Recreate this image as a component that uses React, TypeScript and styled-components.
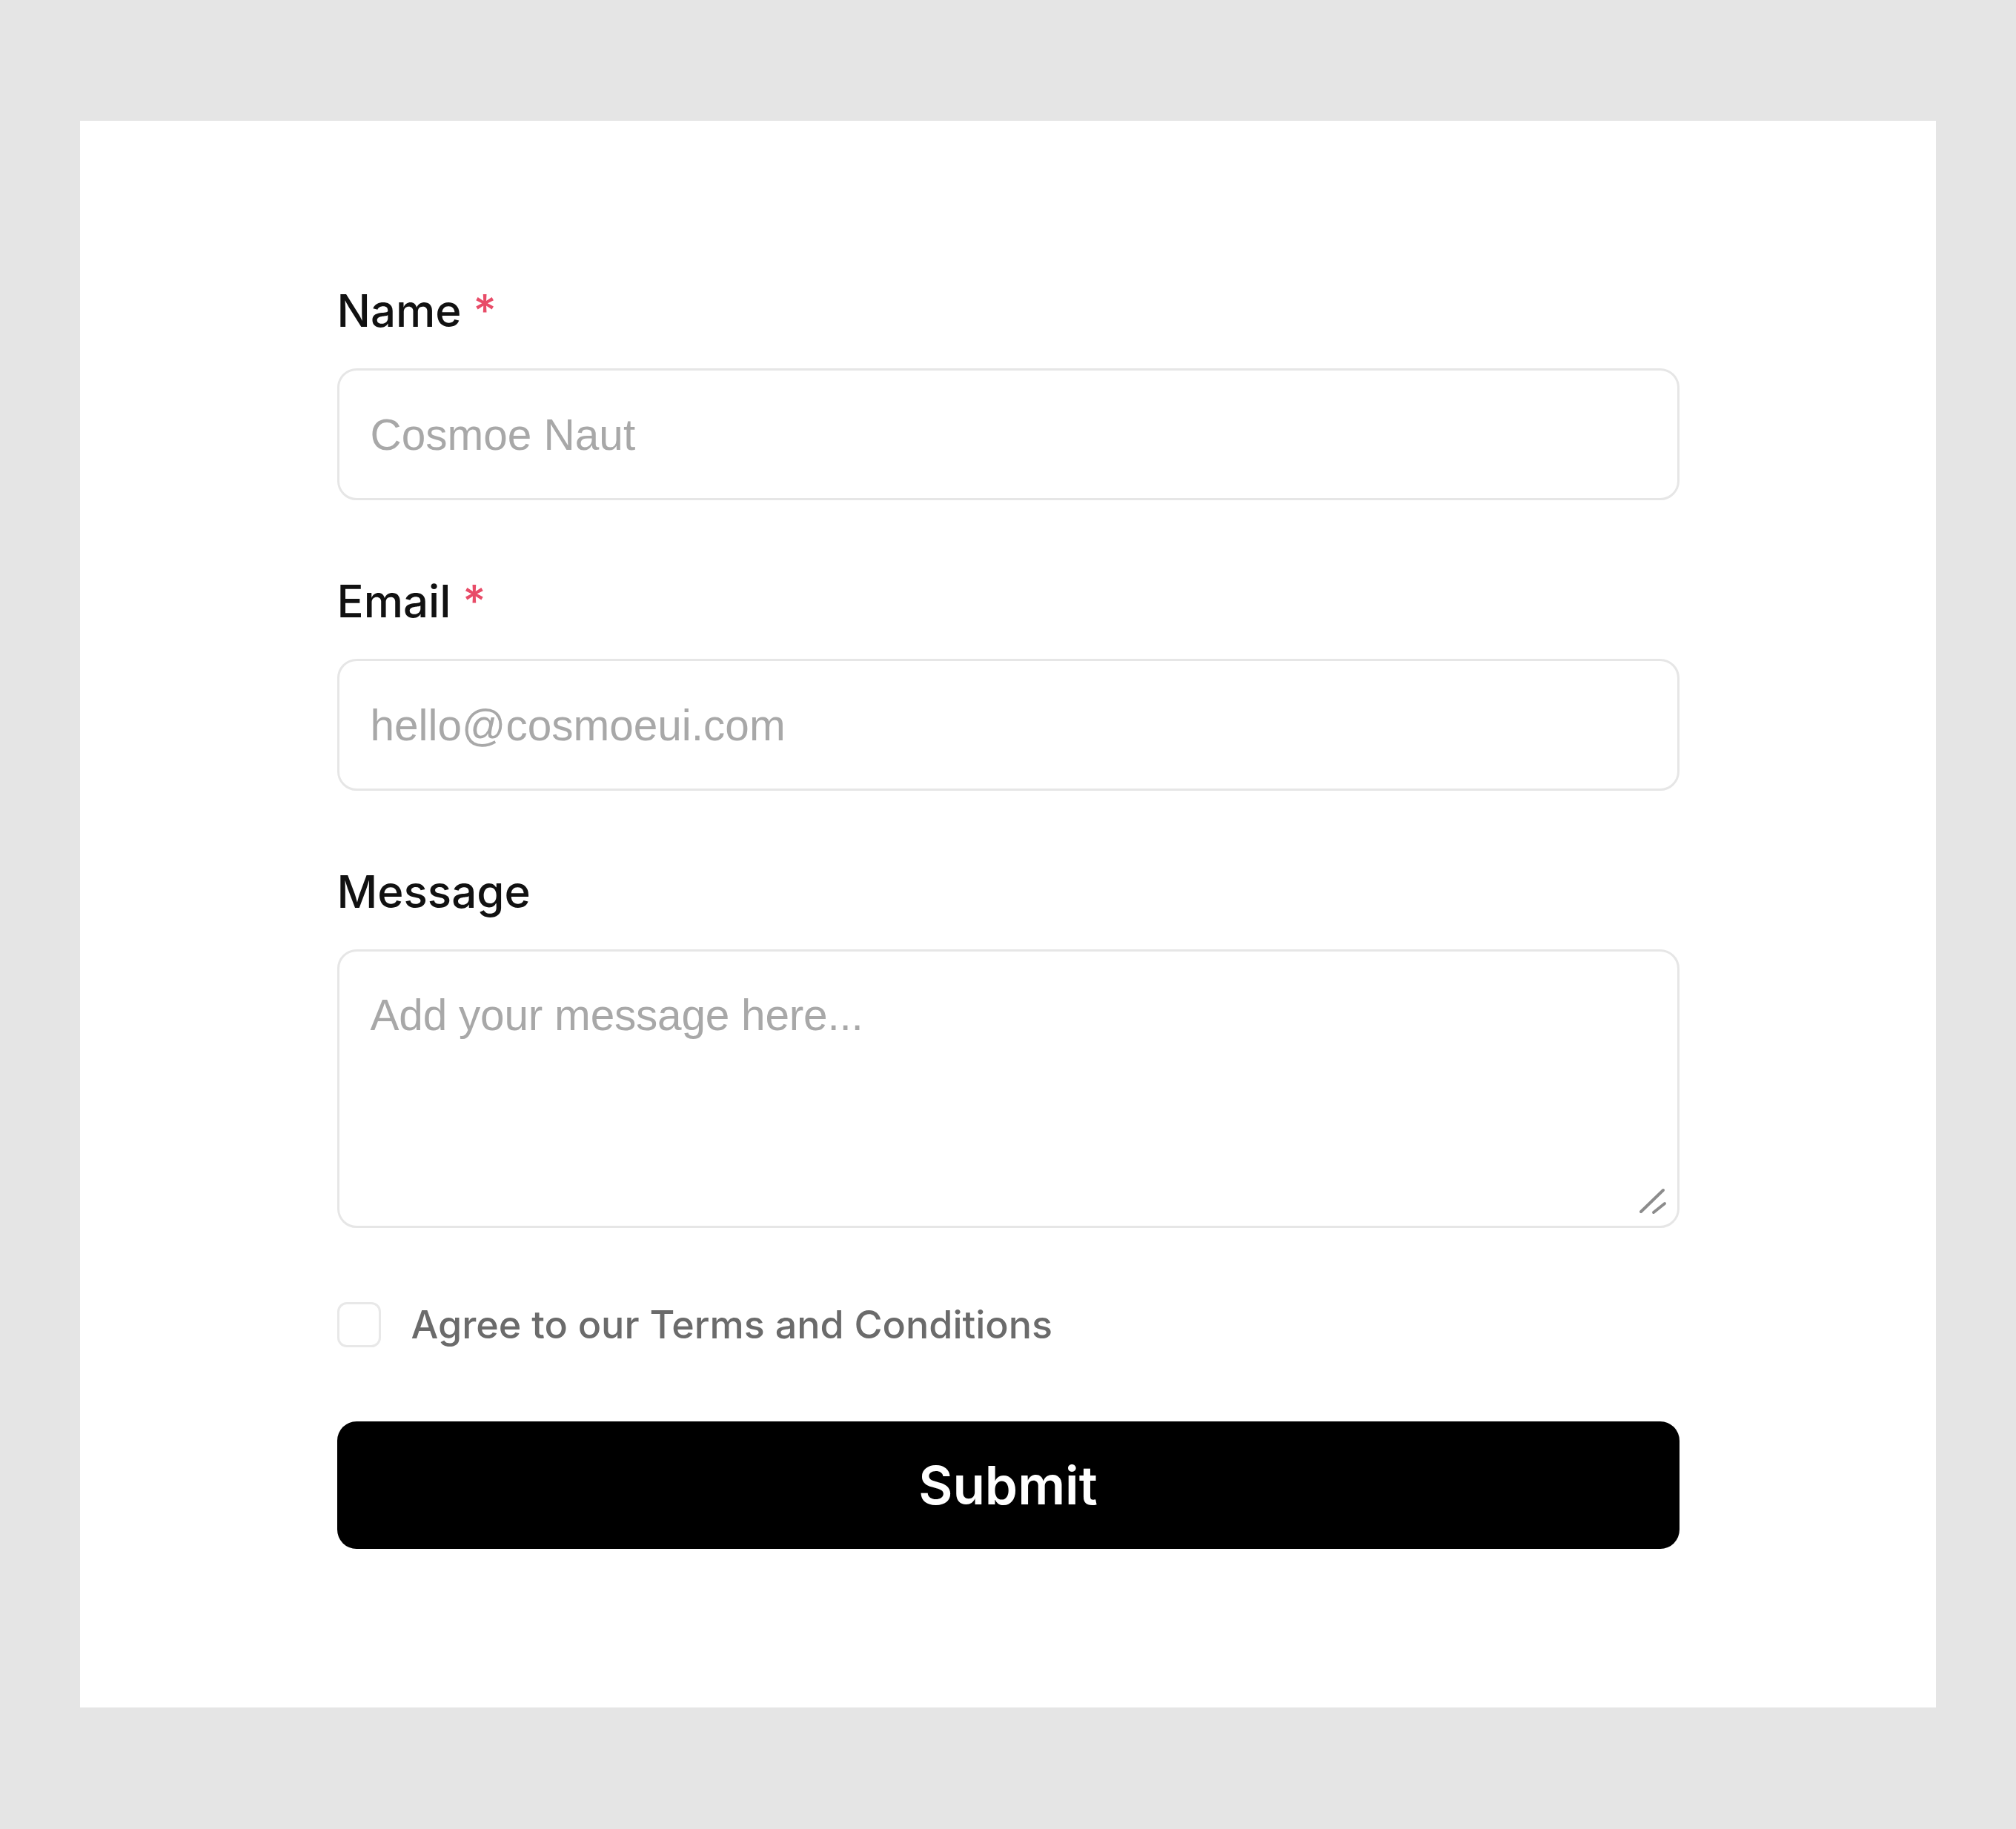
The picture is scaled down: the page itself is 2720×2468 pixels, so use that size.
import { FC } from 'react'
import styled, { createGlobalStyle } from 'styled-components'

const GlobalStyle = createGlobalStyle`
  html, body {
    margin: 0;
    padding: 0;
    background: #e5e5e5;
  }
  * {
    box-sizing: border-box;
  }
`

interface FieldProps {
  label: string
  required?: boolean
  placeholder: string
  multiline?: boolean
  type?: string
}

const Field: FC<FieldProps> = ({ label, required, placeholder, multiline, type = 'text' }) => (
  <FieldWrap>
    <Label>
      {label}
      {required && <Required> *</Required>}
    </Label>
    {multiline ? (
      <AreaWrap>
        <TextArea placeholder={placeholder} />
        <Grip viewBox="0 0 40 40" aria-hidden="true">
          <path d="M4 34 L34 5" />
          <path d="M21 35 L36 23" />
        </Grip>
      </AreaWrap>
    ) : (
      <Input type={type} placeholder={placeholder} />
    )}
  </FieldWrap>
)

const App: FC = () => {
  return (
    <>
      <GlobalStyle />
      <Page>
        <Card>
          <Form onSubmit={(e) => e.preventDefault()}>
            <Field label="Name" required placeholder="Cosmoe Naut" />
            <Field label="Email" required type="email" placeholder="hello@cosmoeui.com" />
            <Field label="Message" multiline placeholder="Add your message here..." />
            <CheckRow>
              <Checkbox type="checkbox" />
              <CheckText>Agree to our Terms and Conditions</CheckText>
            </CheckRow>
            <SubmitButton type="submit">Submit</SubmitButton>
          </Form>
        </Card>
      </Page>
    </>
  )
}

const Page = styled.div`
  padding: 163px 108px 164px;
`

const Card = styled.div`
  background: #ffffff;
  padding: 220px 0 214px;
`

const Form = styled.form`
  width: 1811px;
  margin: 0 auto;
  display: flex;
  flex-direction: column;
  gap: 100px;
`

const FieldWrap = styled.div`
  display: flex;
  flex-direction: column;
  gap: 42px;
`

const Label = styled.label`
  font-family: Inter, 'Noto Sans', sans-serif;
  font-weight: 500;
  font-size: 60px;
  line-height: 72px;
  color: #111111;
`

const Required = styled.span`
  color: #e84c68;
`

const fieldBase = `
  width: 100%;
  border: 3px solid #e6e6e6;
  border-radius: 26px;
  background: #ffffff;
  font-family: 'Liberation Sans', Arial, sans-serif;
  font-size: 58.5px;
  color: #222222;
  outline: none;
  &::placeholder {
    color: #a8a8a8;
  }
`

const Input = styled.input`
  ${fieldBase}
  height: 178px;
  padding: 0 42px;
`

const AreaWrap = styled.div`
  position: relative;
  display: flex;
`

const TextArea = styled.textarea`
  ${fieldBase}
  height: 376px;
  padding: 51px 42px 0;
  line-height: 1.2;
  letter-spacing: -0.2px;
  resize: none;
  display: block;
`

const Grip = styled.svg`
  position: absolute;
  right: 16px;
  bottom: 16px;
  width: 40px;
  height: 40px;
  pointer-events: none;
  path {
    stroke: #8c8c8c;
    stroke-width: 4;
    stroke-linecap: round;
    fill: none;
  }
`

const CheckRow = styled.label`
  display: flex;
  align-items: center;
  gap: 41px;
  height: 61px;
`

const Checkbox = styled.input`
  appearance: none;
  margin: 0;
  width: 59px;
  height: 61px;
  border: 3px solid #e8e8e8;
  border-radius: 13px;
  background: #ffffff;
  flex-shrink: 0;
`

const CheckText = styled.span`
  font-family: Inter, 'Noto Sans', sans-serif;
  font-weight: 500;
  font-size: 52px;
  color: #6b6b6b;
`

const SubmitButton = styled.button`
  height: 172px;
  border: none;
  border-radius: 26px;
  background: #000000;
  color: #ffffff;
  font-family: Inter, 'Noto Sans', sans-serif;
  font-weight: 600;
  font-size: 71px;
  cursor: pointer;
`

export default App
